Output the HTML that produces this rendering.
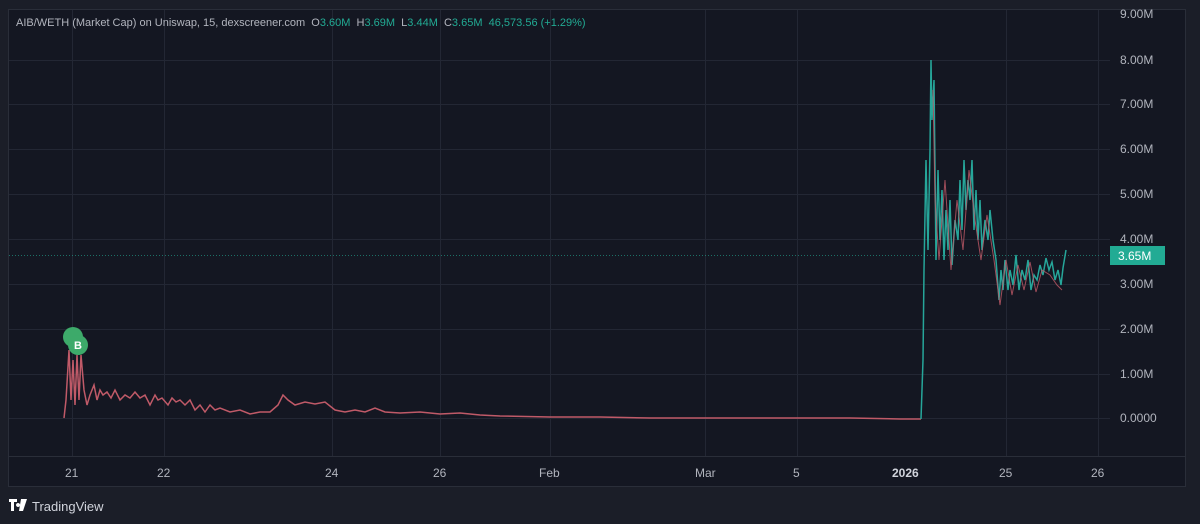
<!DOCTYPE html>
<html><head><style>
body{margin:0;width:1200px;height:524px;background:#1b1e28;font-family:"Liberation Sans",sans-serif;overflow:hidden;position:relative}
.chart{position:absolute;left:8px;top:9px;width:1178px;height:478px;background:#141722;border:1px solid #2a2e39;box-sizing:border-box}
.t{position:absolute;font-size:12px;color:#b2b5be;white-space:nowrap}
.g{color:#22ab94}
</style></head><body>
<div class="chart"></div>
<svg width="1200" height="524" style="position:absolute;left:0;top:0">
<g stroke="#232734" stroke-width="1">
<line x1="9" y1="60.5" x2="1110" y2="60.5"/><line x1="9" y1="104.5" x2="1110" y2="104.5"/><line x1="9" y1="149.5" x2="1110" y2="149.5"/><line x1="9" y1="194.5" x2="1110" y2="194.5"/><line x1="9" y1="239.5" x2="1110" y2="239.5"/><line x1="9" y1="284.5" x2="1110" y2="284.5"/><line x1="9" y1="329.5" x2="1110" y2="329.5"/><line x1="9" y1="374.5" x2="1110" y2="374.5"/><line x1="9" y1="418.5" x2="1110" y2="418.5"/>
<line x1="72.5" y1="10" x2="72.5" y2="456"/><line x1="164.5" y1="10" x2="164.5" y2="456"/><line x1="332.5" y1="10" x2="332.5" y2="456"/><line x1="440.5" y1="10" x2="440.5" y2="456"/><line x1="550.5" y1="10" x2="550.5" y2="456"/><line x1="705.5" y1="10" x2="705.5" y2="456"/><line x1="797.5" y1="10" x2="797.5" y2="456"/><line x1="1006.5" y1="10" x2="1006.5" y2="456"/><line x1="1098.5" y1="10" x2="1098.5" y2="456"/>
</g>
<line x1="9" y1="456.5" x2="1186" y2="456.5" stroke="#2a2e39"/>
<line x1="9" y1="255.5" x2="1110" y2="255.5" stroke="#22ab94" stroke-dasharray="1 2" opacity=".6"/>
<polyline fill="none" stroke="#c05a68" stroke-width="1.5" points="64,418 66,400 69,350 71,400 73,360 75,405 77,355 79,400 81,355 84,390 87,405 90,395 94,385 97,400 100,390 103,395 107,392 111,398 115,390 120,400 125,395 130,398 135,392 140,398 145,395 150,405 155,395 158,400 162,398 168,405 172,398 176,402 180,400 185,405 190,400 195,410 200,405 205,412 210,405 215,410 220,408 230,412 240,410 250,414 260,412 270,412 278,405 283,395 288,400 295,405 305,402 315,404 325,402 335,410 345,412 355,410 365,412 375,408 385,412 400,413 420,412 440,414 460,413 480,415 500,416 550,417 600,417 650,418 700,418 750,418 800,418 850,418 900,419 921,419"/>
<polyline fill="none" stroke="#26a69a" stroke-width="1.5" points="921,419 923,360 924,270 926,160 928,250 930,150 931,60 932,120 934,80 936,260 938,170 940,240 942,190 944,260 946,210 948,250 950,200 952,265 955,220 958,240 960,180 962,230 964,160 966,210 968,180 970,200 972,160 974,230 976,190 978,240 980,200 982,250 985,220 988,240 990,210 993,240 996,260 999,300 1001,270 1003,290 1005,260 1008,290 1010,270 1013,285 1016,255 1019,290 1022,270 1025,280 1028,260 1031,290 1034,275 1037,280 1040,265 1043,275 1046,258 1049,270 1052,262 1055,280 1058,270 1061,285 1063,268 1066,250"/>
<polyline fill="none" stroke="#c05a68" stroke-width="1" opacity=".8" points="933,90 935,200 939,260 945,180 951,270 957,200 963,250 969,170 975,220 981,260 987,215 994,260 1000,305 1006,260 1012,295 1018,265 1024,290 1030,262 1036,292 1042,270 1050,275 1057,285 1062,290"/>
<circle cx="73" cy="337" r="10" fill="#3daa6a"/><circle cx="78" cy="345" r="10" fill="#3daa6a"/>
<text x="78" y="349" fill="#fff" font-size="11" font-weight="bold" text-anchor="middle" font-family="Liberation Sans">B</text>
<rect x="1110" y="246" width="55" height="19" fill="#22ab94"/>
<text x="1118" y="260" fill="#fff" font-size="12" font-family="Liberation Sans">3.65M</text>
<g fill="#fff"><path d="M9 499h8v3h-3v9h-3v-9h-2z M18 503a2 2 0 1 0 0.1 0z M21 499h6l-4 12h-4z"/></g>
</svg>
<div class="t" style="left:16px;top:17px;font-size:11px">AIB/WETH (Market Cap) on Uniswap, 15, dexscreener.com &nbsp;O<span class="g">3.60M</span> &nbsp;H<span class="g">3.69M</span> &nbsp;L<span class="g">3.44M</span> &nbsp;C<span class="g">3.65M</span> &nbsp;<span class="g">46,573.56 (+1.29%)</span></div>
<div class="t" style="left:1120px;top:7px">9.00M</div>
<div class="t" style="left:1120px;top:53px">8.00M</div>
<div class="t" style="left:1120px;top:97px">7.00M</div>
<div class="t" style="left:1120px;top:142px">6.00M</div>
<div class="t" style="left:1120px;top:187px">5.00M</div>
<div class="t" style="left:1120px;top:232px">4.00M</div>
<div class="t" style="left:1120px;top:277px">3.00M</div>
<div class="t" style="left:1120px;top:322px">2.00M</div>
<div class="t" style="left:1120px;top:367px">1.00M</div>
<div class="t" style="left:1120px;top:411px">0.0000</div>
<div class="t" style="left:65px;top:466px">21</div>
<div class="t" style="left:157px;top:466px">22</div>
<div class="t" style="left:325px;top:466px">24</div>
<div class="t" style="left:433px;top:466px">26</div>
<div class="t" style="left:539px;top:466px">Feb</div>
<div class="t" style="left:695px;top:466px">Mar</div>
<div class="t" style="left:793px;top:466px">5</div>
<div class="t" style="left:892px;top:466px;font-weight:bold;color:#d1d4dc">2026</div>
<div class="t" style="left:999px;top:466px">25</div>
<div class="t" style="left:1091px;top:466px">26</div>
<div class="t" style="left:32px;top:499px;font-size:13px;color:#d1d4dc">TradingView</div>
</body></html>
